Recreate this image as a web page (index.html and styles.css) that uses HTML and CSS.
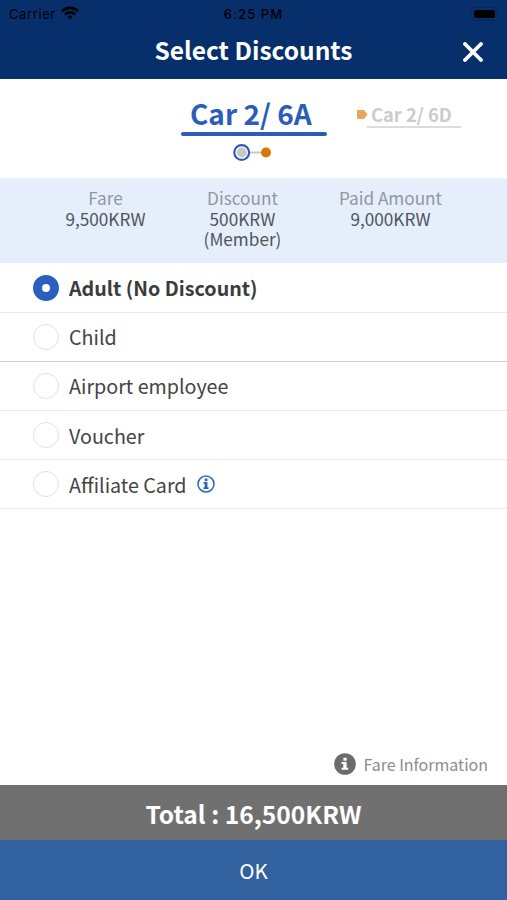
FILE: index.html
```
<!DOCTYPE html>
<html lang="en">
<head>
    <meta charset="UTF-8">
    <meta name="viewport" content="width=device-width, initial-scale=1.0">
    <title>Select Discounts</title>
    <link rel="stylesheet" href="styles.css">
</head>
<body>
    <div class="screen">
        <header class="header">
            <div class="status-bar">
                <div class="carrier">
                    <span>Carrier</span>
                    <svg class="wifi" width="18" height="14" viewBox="0 0 18 14" fill="none" stroke="#000" stroke-width="2.6">
                        <path d="M1 5.2a11.4 11.4 0 0 1 16 0"/>
                        <path d="M4 8.4a7.2 7.2 0 0 1 10 0"/>
                        <path d="M9 13.6L6.2 10.8a4 4 0 0 1 5.6 0z" fill="#000" stroke="none"/>
                    </svg>
                </div>
                <span class="time">6:25 PM</span>
                <div class="battery"><div class="battery-level"></div></div>
            </div>
            <div class="title-bar">
                <h1>Select Discounts</h1>
                <button class="close" aria-label="Close">
                    <svg width="20" height="20" viewBox="0 0 20 20" stroke="#fff" stroke-width="3.8" stroke-linecap="round">
                        <path d="M2 2l16 16M18 2L2 18"/>
                    </svg>
                </button>
            </div>
        </header>

        <nav class="seats">
            <div class="seat active">
                <div class="seat-name">Car 2/ 6A</div>
                <div class="underline"></div>
                <svg class="steps" width="40" height="18" viewBox="0 0 40 18">
                    <path d="M17 8.5h12" stroke="#c6c6bf" stroke-width="2"/>
                    <circle cx="8.7" cy="8.5" r="7.4" fill="#fff" stroke="#2a5cb8" stroke-width="2.2"/>
                    <circle cx="8.7" cy="8.5" r="5" fill="#c8c8c8"/>
                    <circle cx="33" cy="8.5" r="5" fill="#d97706"/>
                </svg>
            </div>
            <div class="seat next">
                <svg class="marker" width="11" height="9" viewBox="0 0 11 9">
                    <path d="M1 0h6l3.6 4.5L7 9H1q-1 0-1-1V1q0-1 1-1z" fill="#e8a65c"/>
                </svg>
                <div class="seat-name">Car 2/ 6D</div>
            </div>
        </nav>

        <section class="summary">
            <div class="summary-item">
                <div class="label">Fare</div>
                <div class="value">9,500KRW</div>
            </div>
            <div class="summary-item">
                <div class="label">Discount</div>
                <div class="value">500KRW<br>(Member)</div>
            </div>
            <div class="summary-item">
                <div class="label">Paid Amount</div>
                <div class="value">9,000KRW</div>
            </div>
        </section>

        <ul class="options">
            <li class="option selected"><span class="radio"></span><span class="name">Adult (No Discount)</span></li>
            <li class="option strong-line"><span class="radio"></span><span class="name">Child</span></li>
            <li class="option"><span class="radio"></span><span class="name">Airport employee</span></li>
            <li class="option"><span class="radio"></span><span class="name">Voucher</span></li>
            <li class="option">
                <span class="radio"></span><span class="name">Affiliate Card</span>
                <svg class="info" width="18" height="18" viewBox="0 0 18 18">
                    <circle cx="9" cy="9" r="8" fill="#fff" stroke="#2a6cc8" stroke-width="1.6"/>
                    <path d="M7.7 3.5h2.7v2.4H7.7zM6.6 7.1h3.8v5.2h1.2v1.7H6.5v-1.7h1.2V8.8H6.6z" fill="#2a5cb8"/>
                </svg>
            </li>
        </ul>

        <div class="fare-info">
            <svg width="22" height="22" viewBox="0 0 22 22">
                <circle cx="11" cy="11" r="10.8" fill="#6c6c6c"/>
                <path d="M9.4 4.7h3.2v3H9.4zM7.6 9h5v5.7h1.6v2H7.6v-2h1.7V11H7.6z" fill="#fff"/>
            </svg>
            <span>Fare Information</span>
        </div>

        <div class="total">Total : 16,500KRW</div>
        <button class="ok">OK</button>
    </div>
</body>
</html>
```
FILE: styles.css
```
* {
    margin: 0;
    padding: 0;
    box-sizing: border-box;
}

body {
    background: #fff;
    color: #444;
    font-family: "Noto Sans CJK KR", sans-serif;
}

button {
    border: none;
    background: none;
    font-family: inherit;
    cursor: pointer;
}

svg {
    display: block;
    flex-shrink: 0;
}

.screen {
    display: flex;
    flex-direction: column;
    height: 900px;
}

/* Header */
.header {
    height: 79px;
    background: #072f6b;
}

.status-bar {
    display: grid;
    grid-template-columns: 1fr auto 1fr;
    align-items: center;
    height: 27px;
    padding: 0 9px;
    color: #000;
    font-family: Inter, sans-serif;
    font-size: 13px;
}

.carrier {
    display: flex;
    align-items: center;
    gap: 5px;
    letter-spacing: 0.6px;
}

.wifi {
    margin-bottom: 1px;
}

.time {
    font-weight: 500;
    letter-spacing: 1.1px;
}

.battery {
    justify-self: end;
    width: 27px;
    padding: 2px;
    border: 1px solid #06285b;
    border-radius: 4px;
}

.battery-level {
    height: 8px;
    border-radius: 2px;
    background: #000;
}

.title-bar {
    display: grid;
    grid-template-columns: 1fr auto 1fr;
    align-items: center;
    height: 48px;
    padding-right: 24px;
    padding-left: 24px;
}

.title-bar h1 {
    grid-column: 2;
    margin-bottom: 2px;
    color: #fff;
    font-size: 24.5px;
    font-weight: 700;
    line-height: 44px;
}

.close {
    justify-self: end;
    margin-top: 2px;
}

/* Seat tabs */
.seats {
    display: flex;
    height: 99px;
    padding: 16px 0 0 181px;
}

.seat.active {
    width: 146px;
    margin-right: 30px;
}

.seat-name {
    font-weight: 700;
    white-space: nowrap;
}

.active .seat-name {
    height: 37px;
    padding-left: 9px;
    color: #2a5cb8;
    font-size: 28px;
    line-height: 36px;
}

.underline {
    height: 4px;
    border-radius: 2px;
    background: #2a5cb8;
}

.steps {
    margin: 8px 0 0 52px;
}

.seat.next {
    display: flex;
}

.marker {
    margin-top: 15px;
}

.next .seat-name {
    width: 94px;
    height: 33px;
    margin-left: -1px;
    padding-left: 4px;
    border-bottom: 2px solid #dcdcdc;
    color: #ccc;
    font-size: 18.3px;
    line-height: 38px;
}

/* Fare summary */
.summary {
    display: grid;
    grid-template-columns: 137px 137px 159px;
    height: 85px;
    padding: 10px 37px;
    background: #e5eefb;
    font-size: 17.2px;
    line-height: 20px;
    text-align: center;
}

.label {
    margin-bottom: 1px;
    color: #92979f;
}

.value {
    color: #50555b;
}

/* Discount options */
.options {
    flex: 1;
    padding-top: 0.5px;
    list-style: none;
}

.option {
    display: flex;
    align-items: center;
    height: 49.2px;
    padding-left: 33px;
    border-bottom: 1px solid #e9e9e9;
    font-size: 19.7px;
}

.strong-line {
    border-bottom-color: #d2d2d2;
}

.radio {
    width: 26px;
    height: 26px;
    margin-right: 10px;
    border: 1px solid #e2e2e2;
    border-radius: 50%;
}

.selected .radio {
    border: 9px solid #2a5fc0;
}

.selected .name {
    color: #3c3c3c;
    font-weight: 700;
}

.info {
    margin-left: 10px;
}

/* Footer */
.fare-info {
    display: flex;
    align-items: center;
    justify-content: flex-end;
    gap: 7px;
    height: 42px;
    padding-right: 19px;
    color: #8c8c8c;
    font-size: 16px;
}

.total {
    height: 55px;
    background: #707070;
    color: #fff;
    font-size: 24.6px;
    font-weight: 700;
    line-height: 56px;
    text-align: center;
}

.ok {
    height: 60px;
    background: #3261a0;
    color: #fff;
    font-size: 20.5px;
    line-height: 60px;
}
```
